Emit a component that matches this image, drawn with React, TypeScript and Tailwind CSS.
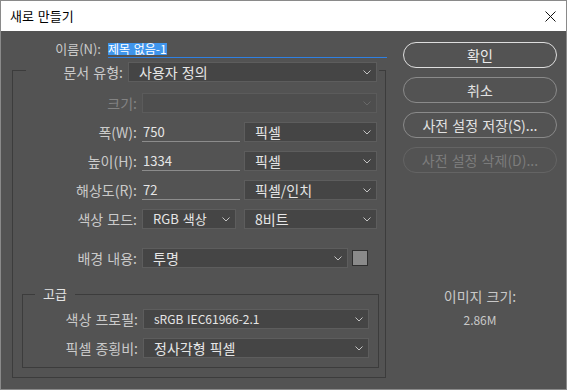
import type { ReactNode } from 'react';

const Chevron = ({ disabled }: { disabled?: boolean }) => (
  <svg
    width="8"
    height="5"
    viewBox="0 0 8 5"
    className={disabled ? 'text-[#686868]' : 'text-[#c4c4c4]'}
  >
    <path d="M0.5 0.5 L4 4 L7.5 0.5" fill="none" stroke="currentColor" strokeWidth="1" />
  </svg>
);

const Select = ({
  value,
  className = '',
  textClass = '',
  disabled,
}: {
  value?: string;
  className?: string;
  textClass?: string;
  disabled?: boolean;
}) => (
  <div
    className={`flex h-[20px] shrink-0 items-center justify-between border pr-[5px] pl-[10px] ${
      disabled ? 'border-[#5b5b5b] bg-[#4e4e4e]' : 'border-[#5d5d5d] bg-[#454545] text-[#e6e6e6]'
    } ${className}`}
  >
    <span className={`whitespace-nowrap ${textClass}`}>{value}</span>
    <Chevron disabled={disabled} />
  </div>
);

const Field = ({ value, className = '' }: { value: string; className?: string }) => (
  <div
    className={`flex h-[20px] shrink-0 items-center border-b border-[#8c8c8c] pl-[1px] text-[13px] text-[#e6e6e6] ${className}`}
  >
    {value}
  </div>
);

const Row = ({
  label,
  labelWidth = 'w-[124px]',
  disabled,
  children,
  className = '',
}: {
  label: string;
  labelWidth?: string;
  disabled?: boolean;
  children: ReactNode;
  className?: string;
}) => (
  <div className={`flex h-[20px] items-center ${className}`}>
    <span
      className={`${labelWidth} shrink-0 text-right whitespace-nowrap ${
        disabled ? 'text-[#838383]' : 'text-[#cacaca]'
      }`}
    >
      {label}
    </span>
    <div className="ml-[5px] flex items-center">{children}</div>
  </div>
);

const PillButton = ({
  children,
  variant = 'normal',
}: {
  children: ReactNode;
  variant?: 'primary' | 'normal' | 'disabled';
}) => {
  const styles = {
    primary: 'border-[#dedede] text-[#ececec]',
    normal: 'border-[#8a8a8a] text-[#e2e2e2]',
    disabled: 'border-[#646464] text-[#7c7c7c]',
  };
  return (
    <div
      className={`flex h-[26px] w-full items-center justify-center rounded-full border-[1.5px] whitespace-nowrap ${styles[variant]}`}
    >
      {children}
    </div>
  );
};

export default function App() {
  return (
    <div
      className="flex h-[390px] w-[567px] flex-col overflow-hidden border border-[#8a8a8a] text-[14px] leading-[16px] [word-spacing:1px]"
      style={{ fontFamily: '"Noto Sans CJK KR", "Noto Sans", sans-serif' }}
    >
      <div className="flex h-[30px] shrink-0 items-center justify-between bg-white pr-[10px] pl-[9px] text-[13px] text-black">
        <span>새로 만들기</span>
        <svg width="11" height="11" viewBox="0 0 11 11">
          <path d="M0.5 0.5 L10.5 10.5 M10.5 0.5 L0.5 10.5" stroke="#111" strokeWidth="1" />
        </svg>
      </div>

      <div className="flex flex-1 bg-[#535353]">
        {/* form */}
        <div className="flex w-[389px] shrink-0 flex-col">
          <div className="mt-[9px] flex h-[18px] items-center">
            <span className="w-[100px] text-right text-[13px] text-[#cacaca]">이름(N):</span>
            <div className="ml-[7px] flex h-[18px] w-[279px] items-center border-b border-[#2f80e2]">
              <span className="bg-[#3f95ec] text-[12px] leading-[12px] text-white">제목 없음-1</span>
            </div>
          </div>

          <fieldset className="ml-[11px] w-[374px] border border-[#3c3c3c] pb-[9px]">
            <legend className="ml-[13px] pt-[4px] pr-[2px]">
              <div className="flex h-[20px] items-center">
                <span className="w-[97px] text-right whitespace-nowrap text-[#cacaca]">문서 유형:</span>
                <Select value="사용자 정의" className="ml-[5px] w-[249px]" />
              </div>
            </legend>

            <div className="mt-[11px] flex flex-col gap-[9px]">
              <Row label="크기:" disabled>
                <Select disabled className="w-[235px]" />
              </Row>
              <Row label="폭(W):">
                <Field value="750" className="w-[98px]" />
                <Select value="픽셀" className="ml-[4px] w-[133px]" />
              </Row>
              <Row label="높이(H):">
                <Field value="1334" className="w-[98px]" />
                <Select value="픽셀" className="ml-[4px] w-[133px]" />
              </Row>
              <Row label="해상도(R):">
                <Field value="72" className="w-[98px]" />
                <Select value="픽셀/인치" className="ml-[4px] w-[133px]" />
              </Row>
              <Row label="색상 모드:">
                <Select value="RGB 색상" className="w-[94px]" textClass="text-[13px]" />
                <Select value="8비트" className="ml-[8px] w-[133px]" />
              </Row>
            </div>

            <Row label="배경 내용:" className="mt-[19px]">
              <Select value="투명" className="w-[206px]" />
              <div className="ml-[4px] h-[16px] w-[16px] border border-[#2e2e2e] bg-[#8a8a8a]" />
            </Row>

            <fieldset className="mt-[18px] ml-[9px] w-[357px] border border-[#3c3c3c] pb-[9px]">
              <legend className="ml-[12px] px-[8px] text-[13px] text-[#e4e4e4]">고급</legend>
              <div className="mt-[7px] flex flex-col gap-[9px]">
                <Row label="색상 프로필:" labelWidth="w-[115px]">
                  <Select value="sRGB IEC61966-2.1" className="w-[226px]" textClass="text-[12px]" />
                </Row>
                <Row label="픽셀 종횡비:" labelWidth="w-[115px]">
                  <Select value="정사각형 픽셀" className="w-[226px]" />
                </Row>
              </div>
            </fieldset>
          </fieldset>
        </div>

        {/* buttons */}
        <div className="ml-[13px] flex w-[154px] shrink-0 flex-col items-center">
          <div className="mt-[11px] flex w-full flex-col gap-[9px]">
            <PillButton variant="primary">확인</PillButton>
            <PillButton>취소</PillButton>
            <PillButton>사전 설정 저장(S)...</PillButton>
            <PillButton variant="disabled">사전 설정 삭제(D)...</PillButton>
          </div>
          <span className="mt-[115px] text-[#c8c8c8]">이미지 크기:</span>
          <span className="mt-[8px] text-[12px] text-[#c8c8c8]">2.86M</span>
        </div>
      </div>
    </div>
  );
}
